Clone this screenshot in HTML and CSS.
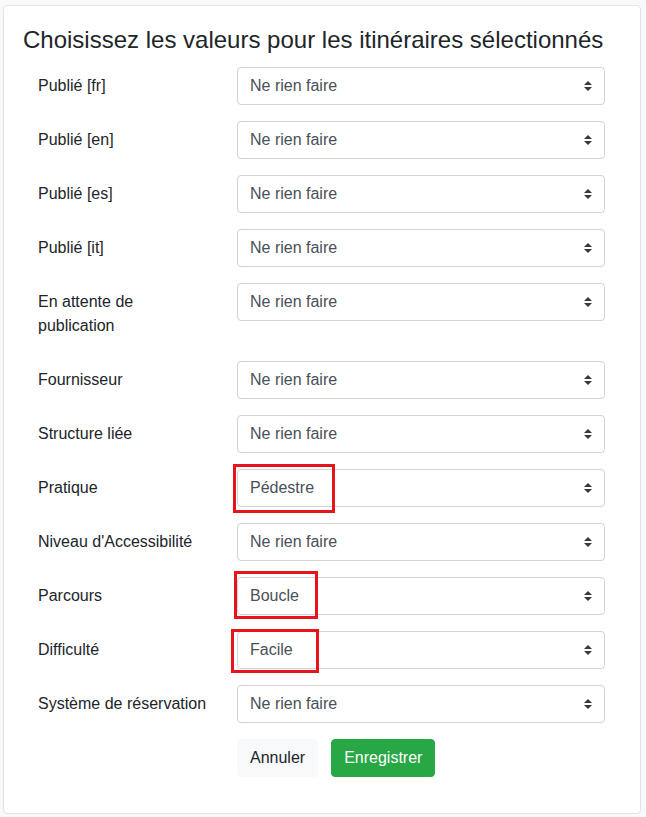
FILE: index.html
```html
<!DOCTYPE html>
<html lang="fr">
<head>
<meta charset="utf-8">
<title>Choisissez les valeurs</title>
<link rel="stylesheet" href="styles.css">
</head>
<body>
<div class="card">
  <h4 class="title">Choisissez les valeurs pour les itinéraires sélectionnés</h4>
  <form class="form">
    <div class="row"><label class="label">Publié [fr]</label><div class="field"><div class="select"><span>Ne rien faire</span><svg class="arrows" viewBox="0 0 4 5" width="8" height="10"><path d="M2 0L0 2h4zm0 5L0 3h4z"/></svg></div></div></div>
    <div class="row"><label class="label">Publié [en]</label><div class="field"><div class="select"><span>Ne rien faire</span><svg class="arrows" viewBox="0 0 4 5" width="8" height="10"><path d="M2 0L0 2h4zm0 5L0 3h4z"/></svg></div></div></div>
    <div class="row"><label class="label">Publié [es]</label><div class="field"><div class="select"><span>Ne rien faire</span><svg class="arrows" viewBox="0 0 4 5" width="8" height="10"><path d="M2 0L0 2h4zm0 5L0 3h4z"/></svg></div></div></div>
    <div class="row"><label class="label">Publié [it]</label><div class="field"><div class="select"><span>Ne rien faire</span><svg class="arrows" viewBox="0 0 4 5" width="8" height="10"><path d="M2 0L0 2h4zm0 5L0 3h4z"/></svg></div></div></div>
    <div class="row"><label class="label">En attente de publication</label><div class="field"><div class="select"><span>Ne rien faire</span><svg class="arrows" viewBox="0 0 4 5" width="8" height="10"><path d="M2 0L0 2h4zm0 5L0 3h4z"/></svg></div></div></div>
    <div class="row"><label class="label">Fournisseur</label><div class="field"><div class="select"><span>Ne rien faire</span><svg class="arrows" viewBox="0 0 4 5" width="8" height="10"><path d="M2 0L0 2h4zm0 5L0 3h4z"/></svg></div></div></div>
    <div class="row"><label class="label">Structure liée</label><div class="field"><div class="select"><span>Ne rien faire</span><svg class="arrows" viewBox="0 0 4 5" width="8" height="10"><path d="M2 0L0 2h4zm0 5L0 3h4z"/></svg></div></div></div>
    <div class="row"><label class="label">Pratique</label><div class="field"><div class="select"><span>Pédestre</span><svg class="arrows" viewBox="0 0 4 5" width="8" height="10"><path d="M2 0L0 2h4zm0 5L0 3h4z"/></svg><div class="mark mark-pedestre"></div></div></div></div>
    <div class="row"><label class="label">Niveau d'Accessibilité</label><div class="field"><div class="select"><span>Ne rien faire</span><svg class="arrows" viewBox="0 0 4 5" width="8" height="10"><path d="M2 0L0 2h4zm0 5L0 3h4z"/></svg></div></div></div>
    <div class="row"><label class="label">Parcours</label><div class="field"><div class="select"><span>Boucle</span><svg class="arrows" viewBox="0 0 4 5" width="8" height="10"><path d="M2 0L0 2h4zm0 5L0 3h4z"/></svg><div class="mark mark-boucle"></div></div></div></div>
    <div class="row"><label class="label">Difficulté</label><div class="field"><div class="select"><span>Facile</span><svg class="arrows" viewBox="0 0 4 5" width="8" height="10"><path d="M2 0L0 2h4zm0 5L0 3h4z"/></svg><div class="mark mark-facile"></div></div></div></div>
    <div class="row"><label class="label">Système de réservation</label><div class="field"><div class="select"><span>Ne rien faire</span><svg class="arrows" viewBox="0 0 4 5" width="8" height="10"><path d="M2 0L0 2h4zm0 5L0 3h4z"/></svg></div></div></div>
    <div class="row"><div></div><div class="field actions"><button type="button" class="btn btn-light">Annuler</button><button type="button" class="btn btn-success">Enregistrer</button></div></div>
  </form>
</div>
</body>
</html>
```
FILE: styles.css
```css
* { box-sizing: border-box; }
html, body { margin: 0; }
body {
  background: #f8f9fa;
  font-family: "Liberation Sans", Arial, sans-serif;
  font-size: 16px;
  line-height: 24px;
  color: #212529;
  padding: 5px 5px 0 3px;
}
.card {
  width: 638px;
  background: #fff;
  border: 1px solid #e1e3e5;
  border-radius: 4px;
  padding: 20px 20px 20px 19px;
}
.title {
  margin: 0 0 12px 0;
  font-size: 24px;
  font-weight: 400;
  line-height: 28.8px;
  color: #212529;
}
.form { margin: 0; }
.row {
  display: grid;
  grid-template-columns: 4fr 8fr;
  margin-bottom: 16px;
}
.label {
  padding: 7px 15px;
}
.field {
  padding: 0 15px;
}
.select {
  position: relative;
  height: 38px;
  display: flex;
  align-items: center;
  justify-content: space-between;
  padding: 6px 12px;
  border: 1px solid #ced4da;
  border-radius: 4px;
  color: #495057;
  background: #fff;
}
.arrows { fill: #343a40; display: block; }
.mark {
  position: absolute;
  border: 3px solid #e8141c;
}
.mark-pedestre { left: -5px; top: -6px; width: 102px; height: 49px; }
.mark-boucle { left: -4px; top: -7px; width: 84px; height: 48px; }
.mark-facile { left: -7px; top: -3px; width: 88px; height: 44px; }
.actions { display: flex; gap: 13px; }
.btn {
  font-family: inherit;
  font-size: 16px;
  line-height: 24px;
  height: 38px;
  padding: 6px 12px;
  border: 1px solid transparent;
  border-radius: 4px;
}
.btn-light { background: #f8f9fa; border-color: #f8f9fa; color: #212529; }
.btn-success { background: #28a745; border-color: #28a745; color: #fff; }
```
